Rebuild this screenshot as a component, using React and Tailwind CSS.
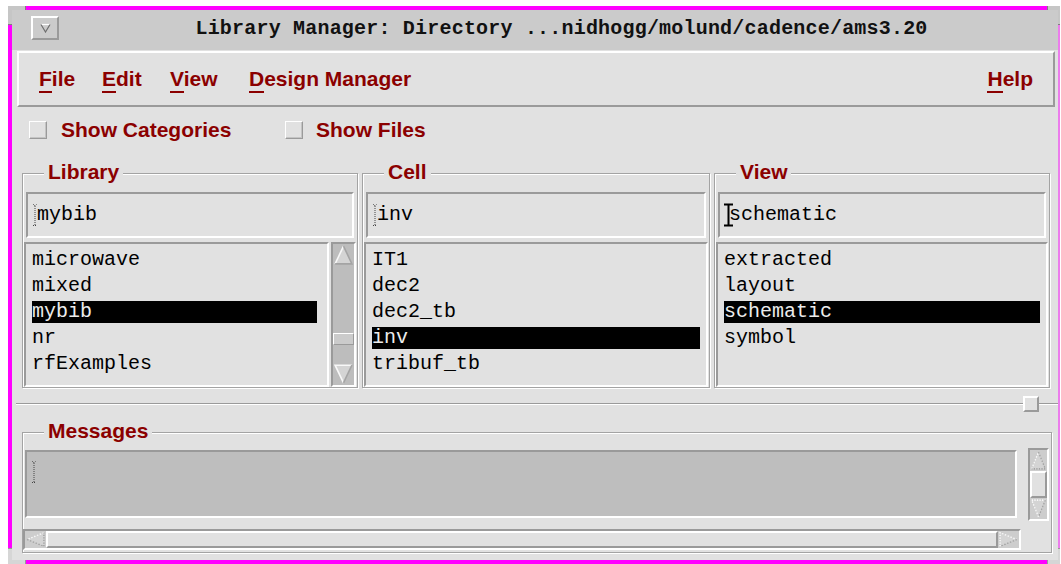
import React from 'react';

const libraries = ['microwave', 'mixed', 'mybib', 'nr', 'rfExamples'];
const cells = ['IT1', 'dec2', 'dec2_tb', 'inv', 'tribuf_tb'];
const views = ['extracted', 'layout', 'schematic', 'symbol'];

const raised = 'border-t-white border-l-white border-b-[#9a9a9a] border-r-[#9a9a9a]';
const sunken = 'border-t-[#9a9a9a] border-l-[#9a9a9a] border-b-white border-r-white';
const sans = "font-['Liberation_Sans',Arial,sans-serif]";
const mono = "font-['Liberation_Mono','Courier_New',monospace]";

// scroll arrow, drawn with a light and a dark edge like Motif does
const Arrow = ({ dir, dotted, className }) => {
  const dash = dotted ? '1.5 1.5' : undefined;
  const shapes = {
    up: { pts: '10,2 18,18 2,18', light: 'M2 18L10 2', dark: 'M10 2L18 18L2 18' },
    down: { pts: '2,2 18,2 10,18', light: 'M10 18L2 2L18 2', dark: 'M18 2L10 18' },
    left: { pts: '2,10 18,2 18,18', light: 'M18 2L2 10', dark: 'M2 10L18 18L18 2' },
    right: { pts: '2,2 18,10 2,18', light: 'M2 18L2 2L18 10', dark: 'M18 10L2 18' },
  }[dir];
  return (
    <svg viewBox="0 0 20 20" preserveAspectRatio="none" className={className}>
      <polygon points={shapes.pts} fill="#d4d4d4" />
      <path d={shapes.light} fill="none" stroke="#f8f8f8" strokeWidth="1.5" strokeDasharray={dash} />
      <path d={shapes.dark} fill="none" stroke="#a4a4a4" strokeWidth="1.5" strokeDasharray={dash} />
    </svg>
  );
};

const Caret = ({ focused }) =>
  focused ? (
    <svg width="9" height="24" viewBox="0 0 9 24" className="shrink-0">
      <path d="M0 1.5h9M4.5 1.5v21M0 22.5h9" stroke="#000" strokeWidth="2" fill="none" />
    </svg>
  ) : (
    <svg width="6" height="24" viewBox="0 0 6 24" className="shrink-0">
      <path d="M1 1l2 2 2-2M3 3v19M1 22.5h4" stroke="#444" strokeWidth="1" strokeDasharray="1 1" fill="none" />
    </svg>
  );

const Group = ({ label, className, children }) => (
  <div className={`relative border border-[#a3a3a3] shadow-[inset_1px_1px_0_#fff,1px_1px_0_#fff] ${className}`}>
    <span className={`absolute left-[21px] top-[-14px] px-[4px] bg-[#e1e1e1] leading-[24px] text-[21px] font-bold text-[#8b0000] ${sans}`}>
      {label}
    </span>
    {children}
  </div>
);

const Field = ({ value, focused }) => (
  <div className={`mx-[3px] h-[46px] border-2 ${sunken} flex items-center pl-[4px] ${mono} text-[20px] text-black`}>
    <Caret focused={focused} />
    <span className={focused ? '-ml-[4px]' : '-ml-[1px]'}>{value}</span>
  </div>
);

const ItemList = ({ items, selected, className }) => (
  <div className={`border-2 ${sunken} pt-[3px] pl-[6px] ${mono} text-[20px] ${className}`}>
    {items.map((it) => (
      <div key={it} className="h-[26px] flex items-center">
        <div className={`h-[22px] w-full leading-[22px] whitespace-pre ${it === selected ? 'bg-black text-[#ececec]' : 'text-black'}`}>
          {it}
        </div>
      </div>
    ))}
  </div>
);

const MenuItem = ({ first, rest, className }) => (
  <div className={className}>
    <span className="border-b-2 border-[#8b0000] pb-[1px]">{first}</span>
    {rest}
  </div>
);

const CheckBox = () => (
  <div className={`w-[18px] h-[18px] border ${raised} bg-[#e1e1e1] shadow-[inset_-1px_-1px_0_#c4c4c4] shrink-0`} />
);

export default function App() {
  return (
    <div className="w-[1061px] h-[564px] bg-white pt-[6px] pl-[8px] overflow-hidden">
      <div className="relative w-[1052px] h-[558px] border-t-4 border-l-4 border-b-4 border-r-2 border-t-[#ff00ff] border-l-[#ff00ff] border-b-[#ff00ff] border-r-[#ec7cec] flex flex-col">
        {/* resize corners of the window frame */}
        <div className="absolute -left-[4px] -top-[4px] w-[18px] h-[4px] bg-[#c6c6c6] border-r border-[#808080]" />
        <div className="absolute -left-[4px] -top-[4px] w-[4px] h-[19px] bg-[#c6c6c6] border-b border-[#808080]" />
        <div className="absolute -right-[2px] -top-[4px] w-[13px] h-[4px] bg-[#c6c6c6] border-l border-[#808080]" />
        <div className="absolute -right-[2px] -top-[4px] w-[2px] h-[19px] bg-[#c6c6c6] border-b border-[#808080]" />
        <div className="absolute -left-[4px] -bottom-[4px] w-[18px] h-[4px] bg-[#d6d6d6] border-r border-[#9a9a9a]" />
        <div className="absolute -left-[4px] -bottom-[4px] w-[4px] h-[16px] bg-[#d6d6d6] border-t border-[#9a9a9a]" />
        <div className="absolute -right-[2px] -bottom-[4px] w-[13px] h-[4px] bg-[#d6d6d6] border-l border-[#9a9a9a]" />
        <div className="absolute -right-[2px] -bottom-[4px] w-[2px] h-[16px] bg-[#d6d6d6] border-t border-[#9a9a9a]" />

        {/* title bar */}
        <div className="h-[40px] bg-[#cbcbcb] flex items-start shrink-0">
          <div className={`ml-[19px] mt-[6px] w-[28px] h-[24px] border-2 ${raised} flex items-center justify-center`}>
            <svg width="11" height="10" viewBox="0 0 11 10">
              <path d="M1 1.5h9" stroke="#fff" strokeWidth="1.2" />
              <path d="M10 1.5L5.5 9L1 1.5" stroke="#6e6e6e" strokeWidth="1.2" fill="none" />
            </svg>
          </div>
          <div className={`flex-1 pl-[6px] mt-[9px] text-center leading-[20px] text-[20px] font-bold tracking-[0.2px] text-[#111] whitespace-pre ${mono}`}>
            Library Manager: Directory ...nidhogg/molund/cadence/ams3.20
          </div>
        </div>

        <div className="flex-1 bg-[#e1e1e1] flex flex-col pt-[1px]">
          {/* menu bar */}
          <div className={`ml-[5px] mr-[3px] h-[56px] border-2 ${raised} flex items-center px-[20px] text-[21px] font-bold text-[#8b0000] ${sans}`}>
            <MenuItem first="F" rest="ile" className="w-[63px]" />
            <MenuItem first="E" rest="dit" className="w-[68px]" />
            <MenuItem first="V" rest="iew" className="w-[79px]" />
            <MenuItem first="D" rest="esign Manager" />
            <div className="flex-1" />
            <MenuItem first="H" rest="elp" />
          </div>

          {/* toggles */}
          <div className={`mt-[12px] h-[22px] flex items-center pl-[17px] text-[21px] font-bold text-[#8b0000] ${sans}`}>
            <div className="w-[256px] flex items-center">
              <CheckBox />
              <span className="ml-[14px]">Show Categories</span>
            </div>
            <div className="flex items-center">
              <CheckBox />
              <span className="ml-[13px]">Show Files</span>
            </div>
          </div>

          {/* library / cell / view browsers */}
          <div className="mt-[32px] ml-[10px] flex gap-[4px]">
            <Group label="Library" className="w-[336px] pt-[18px]">
              <Field value="mybib" />
              <div className="mt-[4px] mx-[1px] h-[145px] flex">
                <ItemList items={libraries} selected="mybib" className="flex-1 pr-[10px]" />
                <div className={`ml-[2px] w-[25px] border-2 ${sunken} bg-[#bdbdbd] flex flex-col`}>
                  <Arrow dir="up" className="h-[22px] w-full" />
                  <div className="flex-1" />
                  <div className={`h-[12px] border ${raised} bg-[#cbcbcb]`} />
                  <div className="h-[18px]" />
                  <Arrow dir="down" className="h-[22px] w-full" />
                </div>
              </div>
            </Group>
            <Group label="Cell" className="w-[348px] pt-[18px]">
              <Field value="inv" />
              <div className="mt-[4px] mx-[1px] h-[145px] flex">
                <ItemList items={cells} selected="inv" className="flex-1 pr-[6px]" />
              </div>
            </Group>
            <Group label="View" className="w-[336px] pt-[18px]">
              <Field value="schematic" focused />
              <div className="mt-[4px] mx-[1px] h-[145px] flex">
                <ItemList items={views} selected="schematic" className="flex-1 pr-[6px]" />
              </div>
            </Group>
          </div>

          {/* pane sash */}
          <div className="relative ml-[4px] h-[30px]">
            <div className="absolute left-0 right-0 top-[15px] h-[2px] border-t border-t-[#9a9a9a] border-b border-b-white" />
            <div className={`absolute right-[19px] top-[8px] w-[16px] h-[16px] border-2 ${raised} bg-[#e1e1e1]`} />
          </div>

          {/* messages */}
          <Group label="Messages" className="mt-[14px] ml-[10px] mr-[6px] pt-[15px] pb-[2px]">
            <div className="flex items-start pl-[2px] pr-[2px]">
              <div className={`mt-[2px] w-[992px] h-[68px] border-2 ${sunken} bg-[#bebebe] pl-[4px] pt-[8px]`}>
                <Caret />
              </div>
              <div className={`ml-[11px] w-[21px] h-[73px] border-2 ${sunken} bg-[#cdcdcd] flex flex-col`}>
                <Arrow dir="up" dotted className="h-[21px] w-full" />
                <div className={`h-[27px] border-2 ${raised} bg-[#e1e1e1]`} />
                <Arrow dir="down" dotted className="h-[21px] w-full" />
              </div>
            </div>
            <div className={`mt-[8px] ml-[0px] w-[998px] h-[21px] border-2 ${sunken} bg-[#cdcdcd] flex`}>
              <Arrow dir="left" dotted className="w-[21px] h-full" />
              <div className={`flex-1 border-2 ${raised} bg-[#e1e1e1]`} />
              <Arrow dir="right" dotted className="w-[21px] h-full" />
            </div>
          </Group>
        </div>
      </div>
    </div>
  );
}
